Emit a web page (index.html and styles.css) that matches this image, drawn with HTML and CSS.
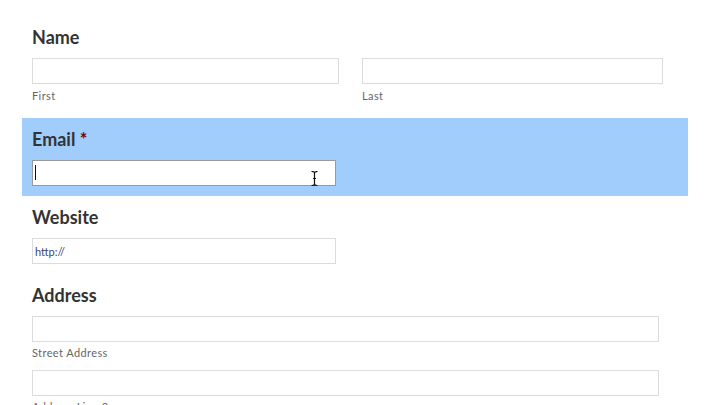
FILE: index.html
```html
<!DOCTYPE html>
<html>
<head>
<meta charset="utf-8">
<link rel="stylesheet" href="styles.css">
</head>
<body>
<ul class="form">
  <li class="field field-name">
    <label class="field-label">Name</label>
    <div class="name-row">
      <span class="name-first">
        <input type="text" class="input">
        <label class="sublabel">First</label>
      </span>
      <span class="name-last">
        <input type="text" class="input">
        <label class="sublabel">Last</label>
      </span>
    </div>
  </li>
  <li class="field field-email highlight">
    <label class="field-label">Email <span class="required">*</span></label>
    <div class="input-wrap medium">
      <input type="text" class="input focused">
      <span class="caret"></span>
      <svg class="ibeam" width="7" height="15" viewBox="0 0 7 15">
        <path d="M0.5 0.5 Q3.5 0.5 3.5 2 Q3.5 0.5 6.5 0.5 M3.5 2 V13 M0.5 14.5 Q3.5 14.5 3.5 13 Q3.5 14.5 6.5 14.5 M2 7.5 H5" fill="none" stroke="#111" stroke-width="1.2"/>
      </svg>
    </div>
  </li>
  <li class="field">
    <label class="field-label">Website</label>
    <input type="text" class="input medium url" value="http://">
  </li>
  <li class="field field-address">
    <label class="field-label">Address</label>
    <span class="addr-line">
      <input type="text" class="input full">
      <label class="sublabel">Street Address</label>
    </span>
    <span class="addr-line">
      <input type="text" class="input full">
      <label class="sublabel">Address Line 2</label>
    </span>
  </li>
</ul>
</body>
</html>
```
FILE: styles.css
```css
html, body {
  margin: 0;
  padding: 0;
  background: #fff;
  overflow: hidden;
}
.form {
  list-style: none;
  margin: 16px 0 0 22px;
  padding: 0;
  width: 666px;
  font-family: Lato, "Open Sans", sans-serif;
}
.field {
  padding: 8px 10px 10px;
}
.highlight {
  background: #a1cdfc;
}
.field-label {
  display: block;
  font-weight: 700;
  font-size: 18px;
  line-height: 22px;
  color: #333;
  padding-top: 2px;
  margin-bottom: 10px;
}
.required {
  color: #790000;
}
.input {
  display: block;
  box-sizing: border-box;
  height: 26px;
  margin: 0;
  padding: 0 2px;
  border: 1px solid #dcdcdc;
  background: #fff;
  font-family: Lato, sans-serif;
  font-size: 11px;
  color: #3a4670;
  outline: none;
}
.medium {
  width: 304px;
}
.input-wrap {
  position: relative;
}
.input-wrap .input {
  width: 100%;
}
.focused {
  border-color: #9a9a9a;
}
.caret {
  position: absolute;
  left: 3px;
  top: 5px;
  width: 1px;
  height: 15px;
  background: #111;
}
.ibeam {
  position: absolute;
  left: 279px;
  top: 11px;
}
.url {
  padding-left: 2px;
}
.name-row {
  display: flex;
  gap: 23px;
}
.name-first {
  width: 307px;
}
.name-last {
  width: 301px;
}
.name-row .input {
  width: 100%;
}
.sublabel {
  display: block;
  font-size: 11px;
  line-height: 16px;
  letter-spacing: 0.4px;
  color: #666;
  padding-top: 4px;
  height: 24px;
  box-sizing: border-box;
}
.addr-line {
  display: block;
}
.full {
  width: 627px;
}
.addr-line .sublabel {
  height: 28px;
  padding-top: 3px;
}
```
